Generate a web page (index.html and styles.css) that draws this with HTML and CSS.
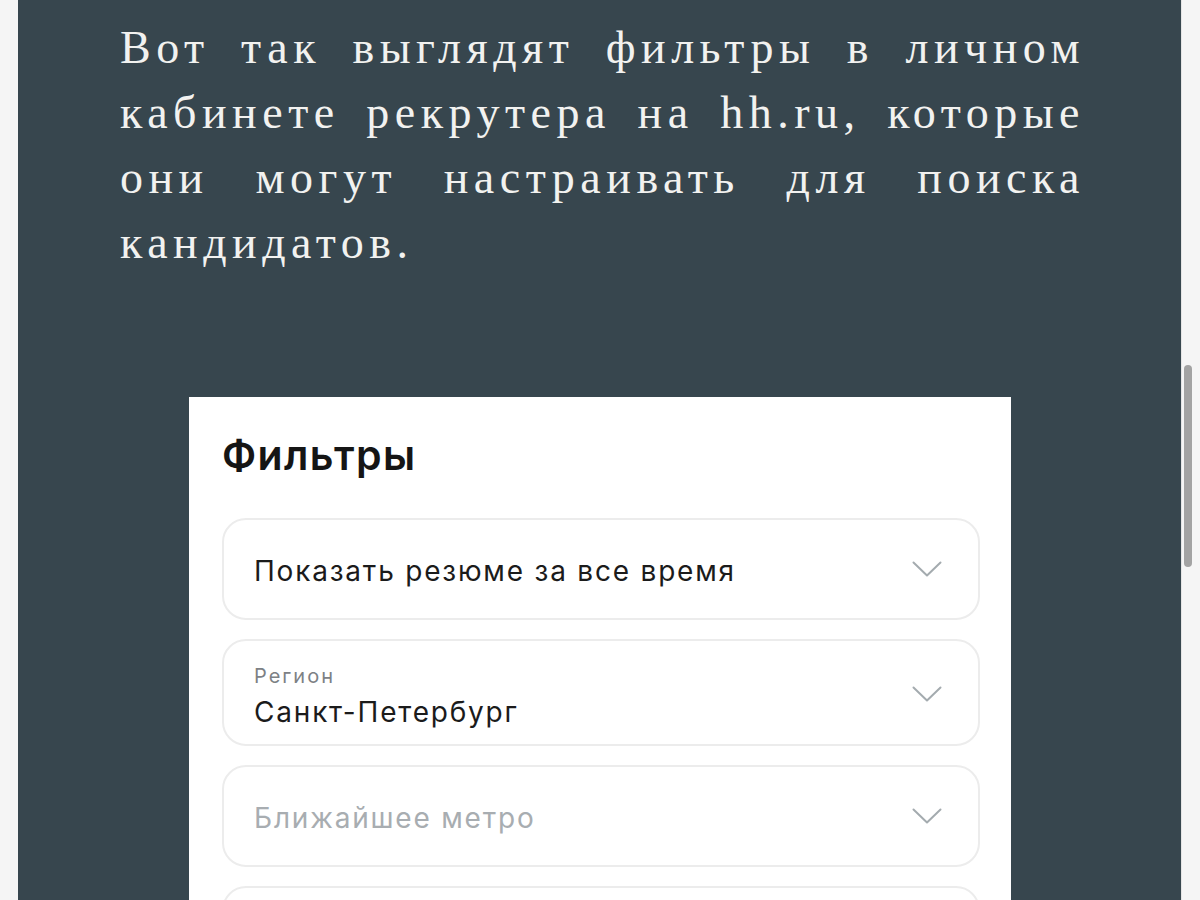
FILE: index.html
```html
<!DOCTYPE html>
<html lang="ru">
<head>
<meta charset="utf-8">
<title>Фильтры</title>
<link rel="stylesheet" href="styles.css">
</head>
<body>
  <div class="edge"></div>
  <main class="panel">
    <p class="lead">
      <span class="line">Вот так выглядят фильтры в личном</span>
      <span class="line">кабинете рекрутера на hh.ru, которые</span>
      <span class="line">они могут настраивать для поиска</span>
      <span class="line last">кандидатов.</span>
    </p>

    <section class="card">
      <h2 class="card-title">Фильтры</h2>

      <div class="field">
        <div class="field-body">
          <span class="value">Показать резюме за все время</span>
        </div>
        <svg class="chevron" viewBox="0 0 30 16" width="30" height="16"><polyline points="1.5,1.5 15,14.5 28.5,1.5"/></svg>
      </div>

      <div class="field field-tall">
        <div class="field-body">
          <span class="label">Регион</span>
          <span class="value">Санкт-Петербург</span>
        </div>
        <svg class="chevron" viewBox="0 0 30 16" width="30" height="16"><polyline points="1.5,1.5 15,14.5 28.5,1.5"/></svg>
      </div>

      <div class="field">
        <div class="field-body">
          <span class="value placeholder">Ближайшее метро</span>
        </div>
        <svg class="chevron" viewBox="0 0 30 16" width="30" height="16"><polyline points="1.5,1.5 15,14.5 28.5,1.5"/></svg>
      </div>

      <div class="field field-cut">
        <div class="field-body"></div>
      </div>
    </section>
  </main>
  <div class="gutter"><div class="thumb"></div></div>
</body>
</html>
```

FILE: styles.css
```css
html, body {
  margin: 0;
  height: 100%;
  overflow: hidden;
}

body {
  display: flex;
  background: #f5f5f5;
}

.edge {
  width: 18px;
  flex: none;
}

.panel {
  flex: 1;
  background: #37464e;
  min-height: 100%;
  overflow: hidden;
}

/* intro paragraph, each line spread to the full measure */
.lead {
  margin: 0;
  padding: 15px 0 0 102px;
  width: 960px;
  font-family: "Liberation Serif", "DejaVu Serif", serif;
  font-size: 46px;
  line-height: 65px;
  letter-spacing: 5.5px;
  color: #f2f2f0;
}

.line {
  display: block;
  white-space: nowrap;
  text-align: justify;
  text-align-last: justify;
  margin-right: -5px;
}

.line.last {
  text-align-last: left;
}

.card {
  margin: 122px 0 0 171px;
  width: 822px;
  box-sizing: border-box;
  padding: 33px 31px 40px 33px;
  background: #ffffff;
  font-family: "Inter", "Liberation Sans", sans-serif;
}

.card-title {
  margin: 0 0 38px;
  font-size: 41px;
  line-height: 50px;
  font-weight: 600;
  color: #151515;
  letter-spacing: 1.4px;
}

.field {
  display: flex;
  align-items: center;
  height: 102px;
  box-sizing: border-box;
  margin-bottom: 19px;
  padding: 4px 36px 0 30px;
  border: 2px solid #ececec;
  border-radius: 24px;
}

.field .chevron {
  margin-top: -4px;
}

.field-tall {
  height: 107px;
  padding-top: 6px;
}

.field-body {
  flex: 1;
  display: flex;
  flex-direction: column;
}

.label {
  font-size: 20px;
  line-height: 26px;
  color: #7d8185;
  letter-spacing: 2px;
  margin-bottom: 6px;
}

.value {
  font-size: 28px;
  line-height: 34px;
  color: #1b1b1b;
  letter-spacing: 1.8px;
}

.placeholder {
  color: #a8adb1;
}

.chevron {
  flex: none;
  fill: none;
  stroke: #a4abaf;
  stroke-width: 2;
  stroke-linecap: round;
  stroke-linejoin: round;
}

.gutter {
  width: 19px;
  flex: none;
  box-sizing: border-box;
  padding: 365px 0 0 2px;
  background: #f5f5f5;
  border-left: 1px solid #e4e4e4;
}

.thumb {
  width: 8px;
  height: 202px;
  border-radius: 4px;
  background: #a3a3a3;
}
```
